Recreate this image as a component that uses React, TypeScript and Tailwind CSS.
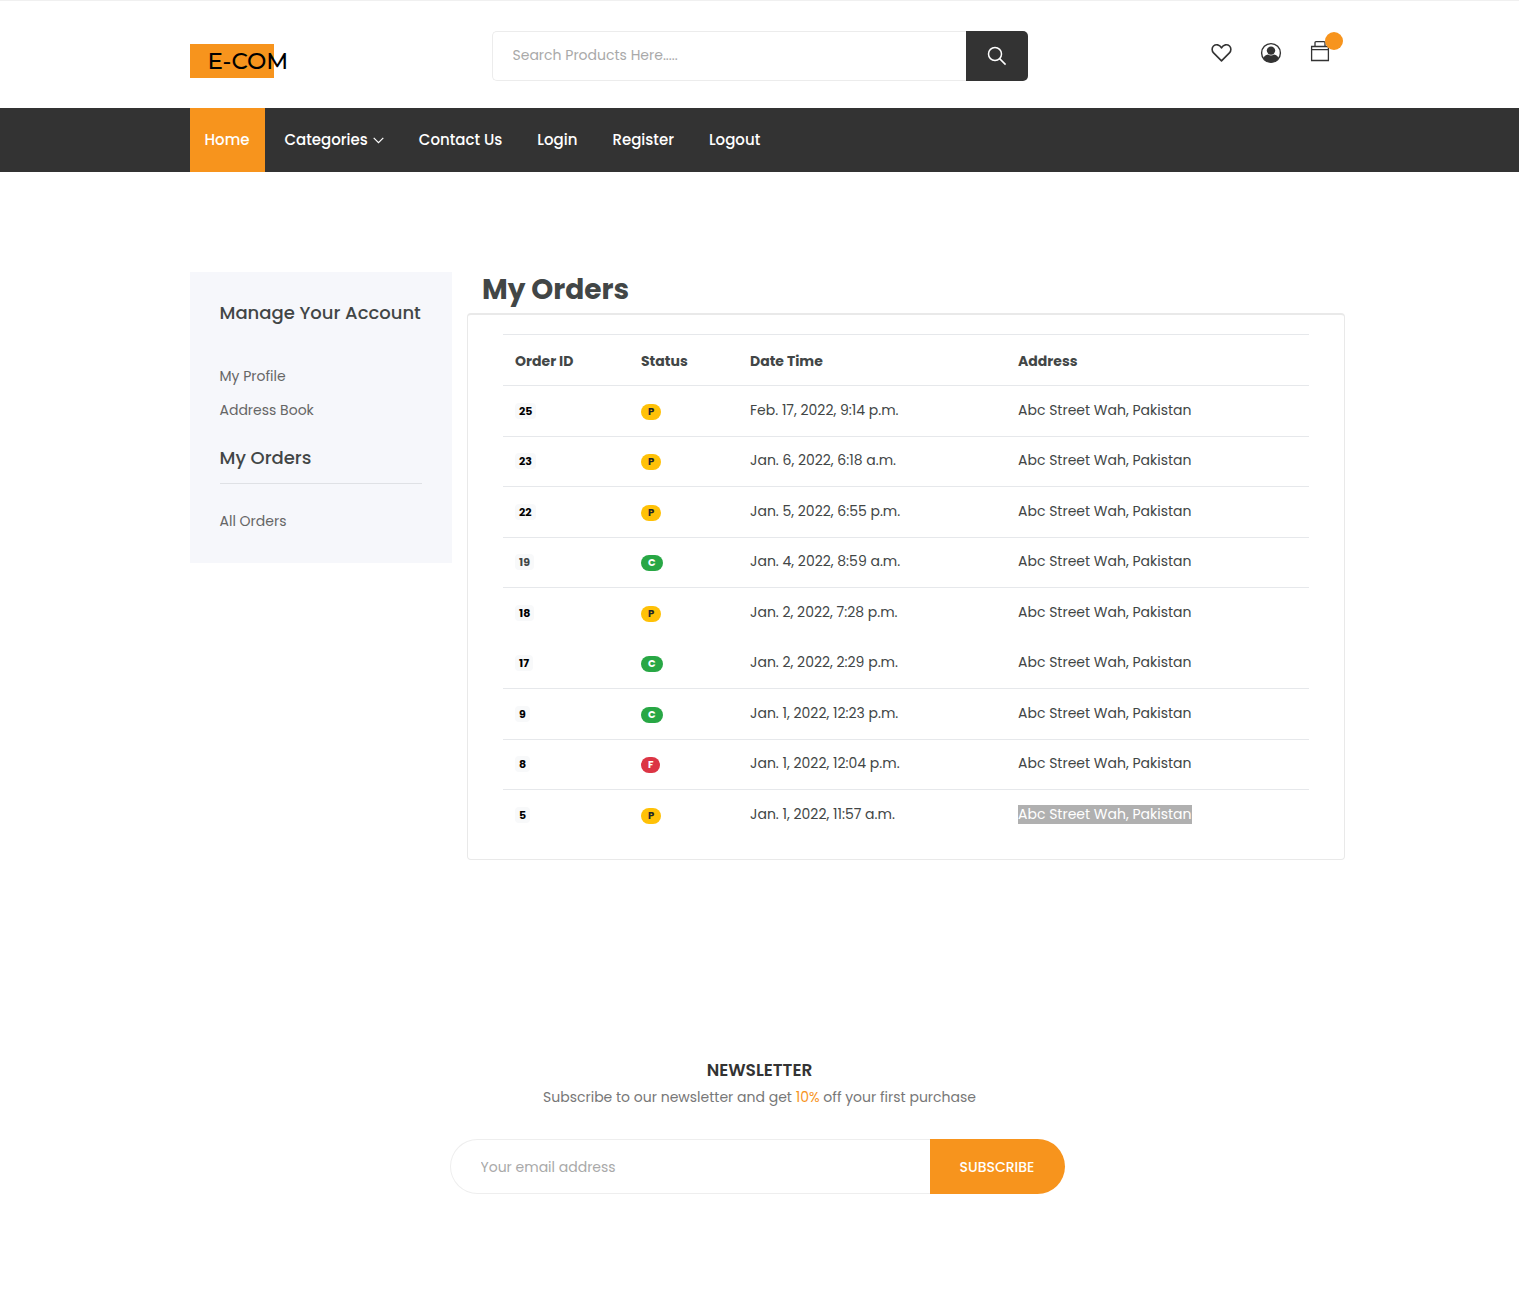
const navLinks = ["Contact Us", "Login", "Register", "Logout"];

type Status = "P" | "C" | "F";

type Order = {
  id: number;
  status: Status;
  date: string;
  muted?: boolean;
  selected?: boolean;
  joined?: boolean;
};

const orders: Order[] = [
  { id: 25, status: "P", date: "Feb. 17, 2022, 9:14 p.m." },
  { id: 23, status: "P", date: "Jan. 6, 2022, 6:18 a.m." },
  { id: 22, status: "P", date: "Jan. 5, 2022, 6:55 p.m." },
  { id: 19, status: "C", date: "Jan. 4, 2022, 8:59 a.m.", muted: true },
  { id: 18, status: "P", date: "Jan. 2, 2022, 7:28 p.m." },
  { id: 17, status: "C", date: "Jan. 2, 2022, 2:29 p.m.", joined: true },
  { id: 9, status: "C", date: "Jan. 1, 2022, 12:23 p.m." },
  { id: 8, status: "F", date: "Jan. 1, 2022, 12:04 p.m." },
  { id: 5, status: "P", date: "Jan. 1, 2022, 11:57 a.m.", selected: true },
];

const statusStyles: Record<Status, string> = {
  P: "bg-[#ffc107] text-[#212529]",
  C: "bg-[#28a745] text-white",
  F: "bg-[#dc3545] text-white",
};

function HeartIcon() {
  return (
    <svg width="21" height="21" viewBox="0 0 22 22" fill="none" stroke="#333" strokeWidth="1.7" strokeLinejoin="round" aria-hidden="true">
      <path d="M11 19.8 2.700 11.4C.600 9.200 .800 5.900 2.600 4.200 5 2.100 9 2.500 11 6.200 13 2.500 17 2.100 19.400 4.200c1.800 1.700 2 5-.1 7.200Z" />
    </svg>
  );
}

function UserIcon() {
  return (
    <svg width="22" height="22" viewBox="0 0 22 22" aria-hidden="true">
      <circle cx="11" cy="11" r="9.400" fill="none" stroke="#333" strokeWidth="1.4" />
      <circle cx="11" cy="8.600" r="4.200" fill="#333" />
      <path d="M3.600 16.500c.5-2.300 1.800-3.600 4.500-3.900 1.700 1.200 4.100 1.200 5.800 0 2.700.3 4 1.600 4.500 3.900-1.700 2.500-4.400 3.900-7.400 3.900s-5.700-1.400-7.400-3.900Z" fill="#333" />
    </svg>
  );
}

function BagIcon() {
  return (
    <svg width="20" height="22" viewBox="0 0 20 22" fill="none" stroke="#333" strokeWidth="1.3" aria-hidden="true">
      <path d="M1.600 6.500h16.800v14H1.600ZM1.600 9.700h16.800M5 6.500V2.600q0-1 1-1h8q1 0 1 1v3.900" />
    </svg>
  );
}

function SearchIcon() {
  return (
    <svg width="20" height="20" viewBox="0 0 20 20" fill="none" stroke="#fff" strokeWidth="1.5" aria-hidden="true">
      <circle cx="8" cy="8" r="6.500" />
      <path d="m12.600 12.600 6 6" />
    </svg>
  );
}

function Header() {
  return (
    <header>
      <div className="border-t border-[#f0f0f0]">
        <div className="mx-auto grid h-[107px] max-w-[1170px] grid-cols-[1fr_536px_1fr] items-center px-[15px]">
          <a
            href="#home"
            className="mt-3 flex h-[34px] w-[84px] items-center bg-[#f7941d] pt-0.5 pl-[18px] font-['Montserrat','Poppins',sans-serif] text-[23px] font-medium whitespace-nowrap text-black"
          >
            E-COM
          </a>
          <form className="mt-0.5 flex h-[50px]">
            <input
              type="search"
              aria-label="Search products"
              placeholder="Search Products Here....."
              className="min-w-0 flex-1 rounded-l-[5px] border border-r-0 border-[#ececec] px-5 pb-px text-sm outline-none placeholder:text-[#a9a9a9]"
            />
            <button type="button" aria-label="Search" className="flex w-[62px] items-center justify-center rounded-r-[5px] bg-[#333]">
              <SearchIcon />
            </button>
          </form>
          <div className="flex items-center justify-end gap-7 pb-1">
            <a href="#wishlist" aria-label="Wishlist">
              <HeartIcon />
            </a>
            <a href="#account" aria-label="Account">
              <UserIcon />
            </a>
            <a href="#cart" aria-label="Cart" className="relative pb-1">
              <BagIcon />
              <span className="absolute -top-2 left-[15px] size-[18px] rounded-full bg-[#f7941d]" />
            </a>
          </div>
        </div>
      </div>
      <nav className="bg-[#333]">
        <ul className="mx-auto flex h-16 max-w-[1170px] gap-[5px] px-[15px] text-[15px] font-medium text-white">
          <li>
            <a href="#home" className="flex h-full items-center bg-[#f7941d] px-[15px]">
              Home
            </a>
          </li>
          <li>
            <a href="#categories" className="flex h-full items-center gap-[5px] px-[15px]">
              Categories
              <svg width="11" height="7" viewBox="0 0 11 7" fill="none" stroke="currentColor" strokeWidth="1.2" aria-hidden="true">
                <path d="m.7.800 4.800 4.900L10.300.800" />
              </svg>
            </a>
          </li>
          {navLinks.map((label) => (
            <li key={label}>
              <a href="#nav" className="flex h-full items-center px-[15px]">
                {label}
              </a>
            </li>
          ))}
        </ul>
      </nav>
    </header>
  );
}

function Sidebar() {
  return (
    <aside className="w-1/4 px-[15px]">
      <div className="bg-[#f6f7fb] px-[30px] pt-[29px] pb-[30px]">
        <h2 className="text-lg leading-6 font-medium whitespace-nowrap text-[#424646]">Manage Your Account</h2>
        <ul className="mt-[39px] space-y-[10px] text-sm leading-6 text-[#666]">
          <li>
            <a href="#profile">My Profile</a>
          </li>
          <li>
            <a href="#addresses">Address Book</a>
          </li>
        </ul>
        <h2 className="mt-6 border-b border-[#dfe1e5] pb-[13px] text-lg leading-6 font-medium text-[#424646]">My Orders</h2>
        <ul className="mt-[25px] text-sm leading-6 text-[#666]">
          <li>
            <a href="#orders">All Orders</a>
          </li>
        </ul>
      </div>
    </aside>
  );
}

function OrdersTable() {
  return (
    <main className="w-3/4">
      <h1 className="px-[15px] pb-[5px] text-[28px] leading-9 font-bold text-[#424646]">My Orders</h1>
      <div className="rounded border border-t-2 border-[#e9e9e9] px-[35px] pt-[19px] pb-5">
        <table className="h-[505px] w-full table-fixed text-left text-sm text-[#424646]">
          <thead>
            <tr className="h-[51px] border-t border-[#e6e8eb] font-bold">
              <th className="w-[126px] px-3 pt-0.5">Order ID</th>
              <th className="w-[109px] px-3 pt-0.5">Status</th>
              <th className="w-[268px] px-3 pt-0.5">Date Time</th>
              <th className="px-3 pt-0.5">Address</th>
            </tr>
          </thead>
          <tbody>
            {orders.map((order) => (
              <tr key={order.id} className={order.joined ? "border-t border-transparent" : "border-t border-[#e6e8eb]"}>
                <td className="px-3 pb-0.5">
                  <a
                    href="#order"
                    className={`mt-0.5 inline-block rounded bg-[#f8f9fa] px-1 text-[11px] leading-4 font-bold ${order.muted ? "text-[#424646]" : "text-black"}`}
                  >
                    {order.id}
                  </a>
                </td>
                <td className="px-3 pb-0.5">
                  <span className={`mt-0.5 inline-block rounded-full px-[7px] text-[10px] leading-4 font-bold ${statusStyles[order.status]}`}>
                    {order.status}
                  </span>
                </td>
                <td className="px-3 pb-0.5">{order.date}</td>
                <td className="px-3 pb-0.5">
                  <span className={order.selected ? "inline-block bg-[#b0b0b0] leading-[19px] text-white" : ""}>Abc Street Wah, Pakistan</span>
                </td>
              </tr>
            ))}
          </tbody>
        </table>
      </div>
    </main>
  );
}

function Newsletter() {
  return (
    <section className="mt-[198px] pb-[100px] text-center">
      <h2 className="text-[17px] leading-6 font-semibold text-[#333]">NEWSLETTER</h2>
      <p className="mt-[3px] text-sm leading-6 text-[#777]">
        Subscribe to our newsletter and get <span className="text-[#f7941d]">10%</span> off your first purchase
      </p>
      <form className="mx-auto mt-[30px] flex h-[55px] max-w-[620px] pr-[5px]">
        <input
          type="email"
          aria-label="Your email address"
          placeholder="Your email address"
          className="min-w-0 flex-1 rounded-l-full border border-r-0 border-[#eee] px-[30px] text-sm outline-none placeholder:text-[#a9a9a9]"
        />
        <button type="button" className="w-[135px] rounded-r-full bg-[#f7941d] text-sm font-medium text-white">
          SUBSCRIBE
        </button>
      </form>
    </section>
  );
}

export default function App() {
  return (
    <div className="min-h-screen bg-white font-['Poppins','Inter',sans-serif]">
      <Header />
      <div className="mx-auto mt-[100px] flex max-w-[1170px] items-start">
        <Sidebar />
        <OrdersTable />
      </div>
      <Newsletter />
    </div>
  );
}
